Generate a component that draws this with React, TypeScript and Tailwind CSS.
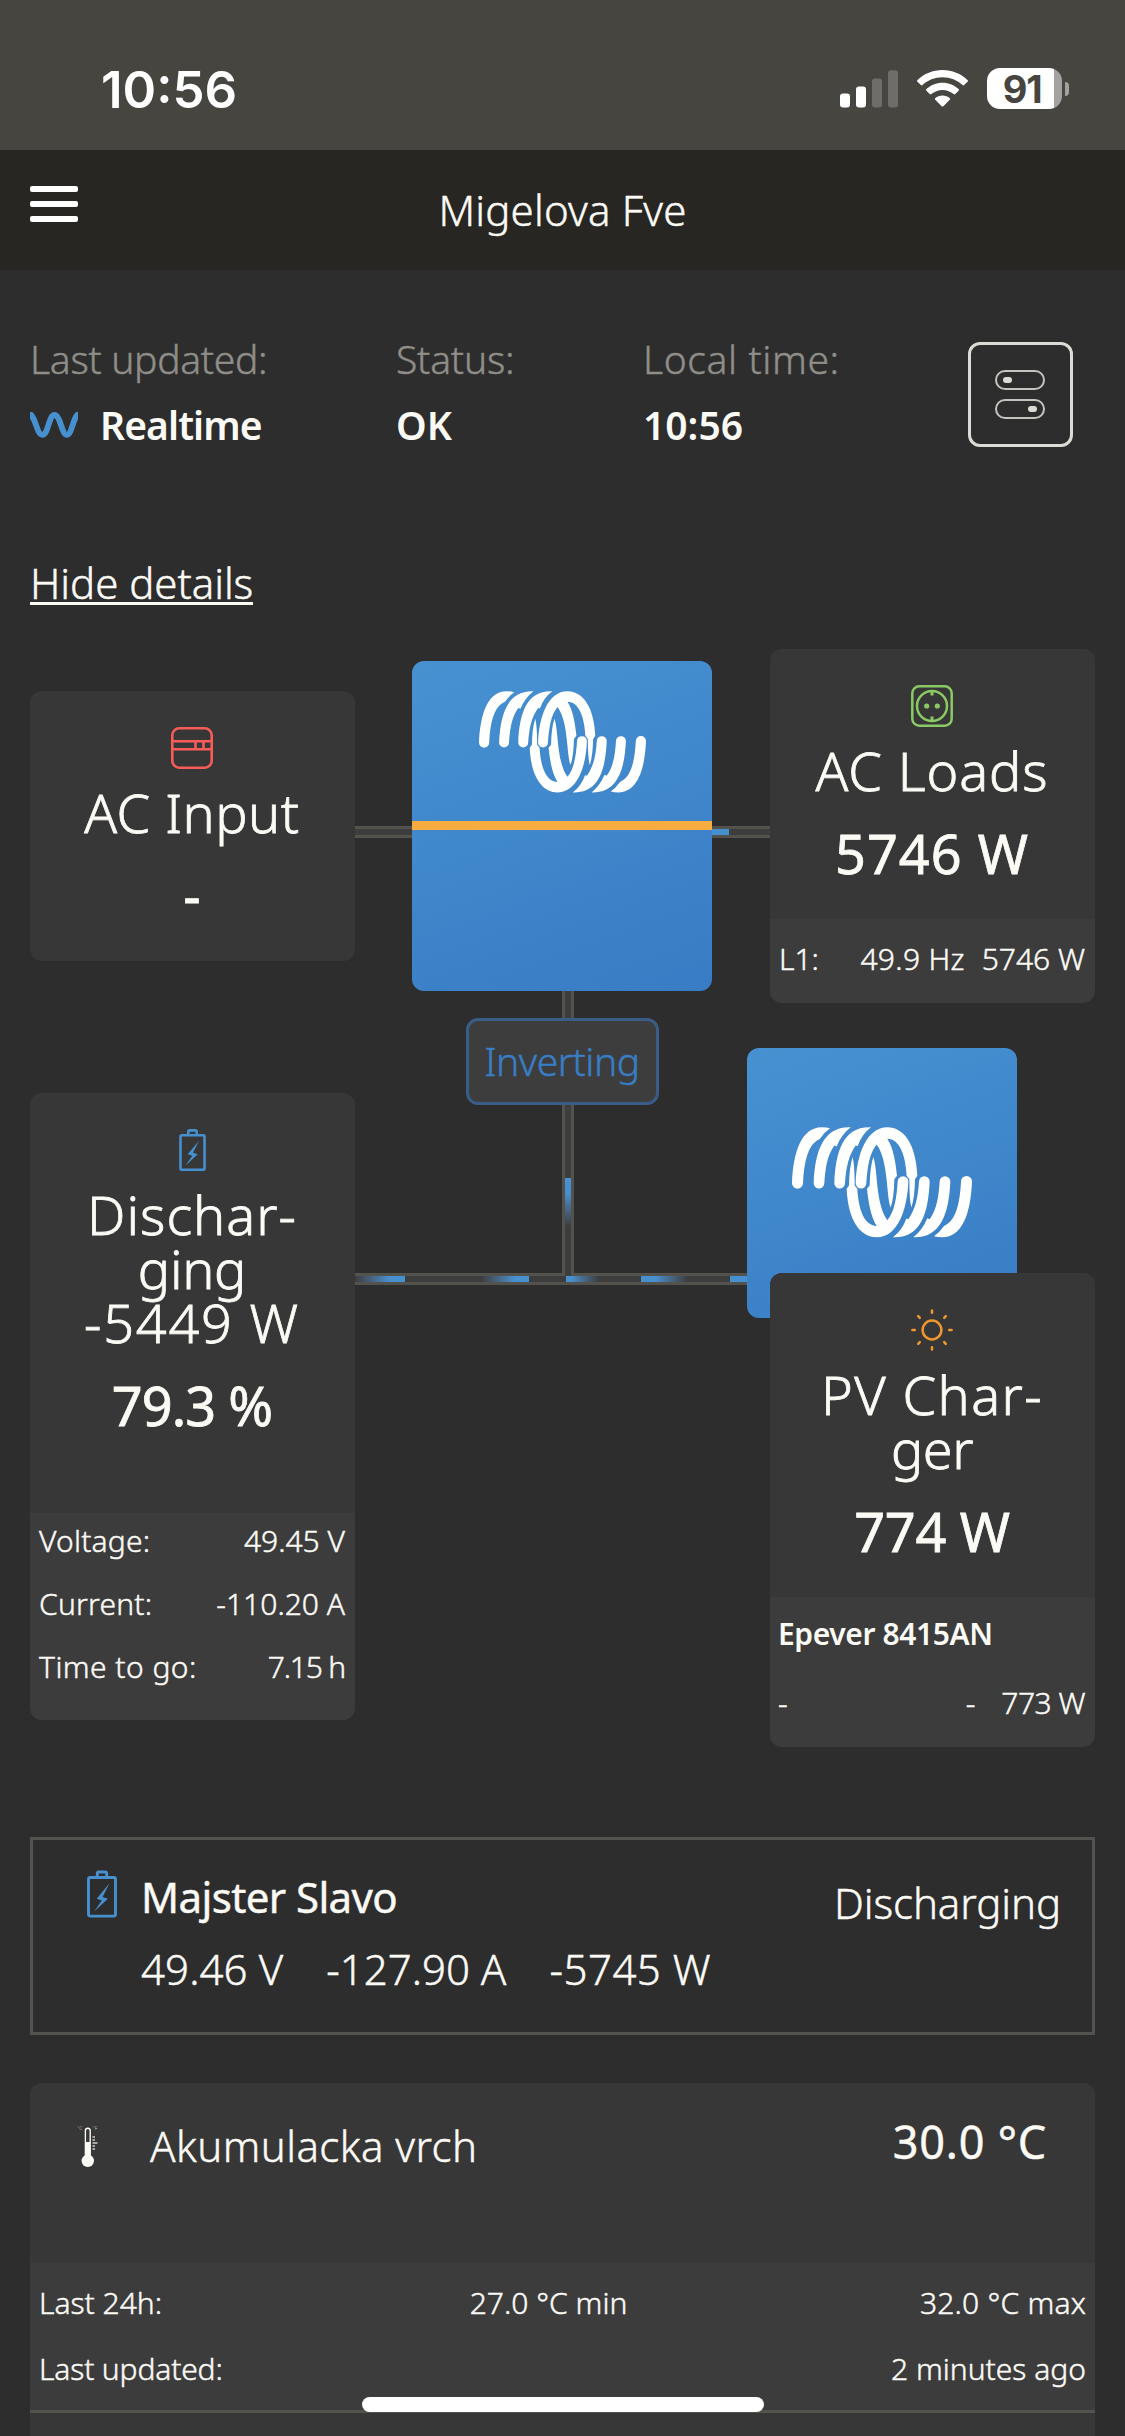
import React from 'react';

/* ---------- icons ---------- */

const coils = [
  'M36 206C40 110 65 40 125 39Q140 39 150 42Q135 52 120 73L110 79C85 95 72 140 69 206a16.5 16.5 0 0 1-33 0Z',
  'M101 206C105 110 130 36 212 39Q185 60 170 96L163 93C140 125 136 165 133 206a16 16 0 0 1-32 0Z',
  'M163 206C167 110 190 36 273 39Q245 60 233 95L227 93C205 125 198 160 195 206a16 16 0 0 1-32 0Z',
  'M227 206C230 120 260 39 322 39C372 39 408 90 412 184L405 194Q404 250 394 279Q388 255 388 194L380 184C377 125 360 73 322 73C340 100 347 145 351 184L343 194Q342 250 332 279C318 240 326 140 290 90C268 115 262 160 259 206a16 16 0 0 1-32 0Z',
];

function CoilLogo({ className }: { className: string }) {
  return (
    <svg viewBox="36 38 540 332" preserveAspectRatio="none" fill="#fff" className={className}>
      {coils.map((d) => (
        <path key={d} d={d} />
      ))}
      <g transform="rotate(180 306 203.5)">
        {coils.map((d) => (
          <path key={d} d={d} />
        ))}
      </g>
    </svg>
  );
}

function GridInputIcon() {
  return (
    <svg viewBox="0 0 42 42" fill="none" stroke="#f75c58" strokeWidth="2.6" className="size-[42px]">
      <rect x="1.3" y="1.3" width="39.4" height="39.4" rx="7" />
      <path d="M1 14.3h40M1 22.3h40M24.5 14v8M32.5 14v8" />
    </svg>
  );
}

function SocketIcon() {
  return (
    <svg viewBox="0 0 42 42" fill="none" stroke="#8bc964" strokeWidth="2.5" className="size-[42px]">
      <rect x="1.3" y="1.3" width="39.4" height="39.4" rx="7" />
      <circle cx="21" cy="21" r="15" />
      <path d="M21 6v4.5M21 31.5V36" strokeWidth="3" />
      <circle cx="15.7" cy="21" r="2.6" fill="#8bc964" stroke="none" />
      <circle cx="26.3" cy="21" r="2.6" fill="#8bc964" stroke="none" />
    </svg>
  );
}

function BatteryIcon({ className }: { className: string }) {
  return (
    <svg viewBox="0 0 28 44" fill="none" stroke="#4790d0" strokeWidth="2.7" className={className}>
      <path d="M9.6 6V3q0-1.6 1.6-1.6h5.6q1.6 0 1.6 1.6v3" />
      <rect x="1.4" y="6.6" width="25.2" height="36" rx="1.6" />
      <path d="M21 12 9 26.5l4.8 1.5L6.5 38.5 19.5 26.5l-5-1.6z" fill="#4790d0" stroke="none" />
    </svg>
  );
}

function SunIcon() {
  return (
    <svg
      viewBox="0 0 42 42"
      fill="none"
      stroke="#f0962e"
      strokeWidth="2.5"
      strokeLinecap="round"
      className="size-[42px]"
    >
      <circle cx="21" cy="21" r="9.4" />
      <path d="M21 1.4v2.4M21 38.2v2.4M1.4 21h2.4M38.2 21h2.4M7.2 7.2l1.6 1.6M33.2 33.2l1.6 1.6M34.8 7.2l-1.6 1.6M8.8 33.2l-1.6 1.6" />
    </svg>
  );
}

function ThermometerIcon() {
  return (
    <svg viewBox="0 0 22 42" className="h-[42px] w-[22px] [-webkit-text-stroke:0px]">
      <rect x="8.4" y="3.2" width="4.8" height="30" rx="2.4" fill="none" stroke="#fbfaf5" strokeWidth="1.4" />
      <rect x="8.2" y="17" width="5.2" height="16" fill="#fbfaf5" />
      <circle cx="10.8" cy="35.8" r="6.2" fill="#fbfaf5" />
      <path
        d="M15.5 12h2.5M15.5 15h2.5M15.5 18h5M15.5 21h2.5M15.5 24h2.5"
        stroke="#cfcfc9"
        strokeWidth="1.4"
      />
      <text x="0" y="4.5" fontSize="5" fill="#cfcfc9">°C</text>
      <text x="15.5" y="4.5" fontSize="5" fill="#cfcfc9">°F</text>
    </svg>
  );
}

function WaveIcon() {
  return (
    <svg viewBox="0 0 48 26" className="h-[26px] w-12" fill="none" stroke="#4790d0" strokeWidth="5.8">
      <path d="M-3 1C6 1 6 22.8 12.3 22.8S18.5 3 24.5 3S31.5 22.8 37 22.8S43 1 51 1" />
    </svg>
  );
}

function SignalIcon() {
  return (
    <svg viewBox="0 0 58 38" className="h-[38px] w-[58px]" fill="#fff">
      <rect x="0" y="23.5" width="10" height="14" rx="3" />
      <rect x="16" y="16.5" width="10" height="21" rx="3" />
      <rect x="32" y="8.5" width="10" height="29" rx="3" opacity=".22" />
      <rect x="48" y="0.3" width="10" height="37.2" rx="3" opacity=".22" />
    </svg>
  );
}

function WifiIcon() {
  return (
    <svg viewBox="0 0 51 37" className="h-[37px] w-[51px]" fill="#fff">
      <path d="M25.5 0C35.2 0 44 3.8 50.5 10Q51.4 10.9 50.5 11.8L47.2 15.1Q46.4 15.9 45.5 15.1C40.3 10.2 33.2 7.3 25.5 7.3S10.7 10.2 5.5 15.1Q4.6 15.9 3.8 15.1L.5 11.8Q-.4 10.9 .5 10C7 3.8 15.8 0 25.5 0Z" />
      <path d="M25.5 12.7C31.7 12.7 37.4 15.1 41.6 19Q42.5 19.9 41.6 20.8L38.3 24.1Q37.5 24.9 36.6 24.1C33.7 21.5 29.8 19.9 25.5 19.9S17.3 21.5 14.4 24.1Q13.5 24.9 12.7 24.1L9.4 20.8Q8.5 19.9 9.4 19C13.6 15.1 19.3 12.7 25.5 12.7Z" />
      <path d="M25.5 25.4C28.3 25.4 30.8 26.4 32.7 28Q33.6 28.9 32.7 29.8L26.4 36.2Q25.5 37 24.6 36.2L18.3 29.8Q17.4 28.9 18.3 28C20.2 26.4 22.7 25.4 25.5 25.4Z" />
    </svg>
  );
}

/* ---------- top bars ---------- */

function StatusBar() {
  return (
    <div className="flex h-[150px] items-start justify-between bg-[#464540] pr-[56px] pl-[101px] [-webkit-text-stroke:0px]">
      <span className="mt-[64px] font-[Inter] text-[51px] leading-[51px] font-semibold text-white">10:56</span>
      <div className="mt-[68px] flex items-center">
        <SignalIcon />
        <div className="ml-[19px]">
          <WifiIcon />
        </div>
        <div className="ml-[19px] flex items-center">
          <div className="flex h-[41px] w-[75px] items-center justify-center rounded-[13px] bg-linear-to-r from-white from-[90%] to-[#a3a2a0] to-[90%]">
            <span className="mr-[5px] font-[Inter] text-[38px] leading-[38px] font-bold tracking-[-1.2px] text-[#464540]">
              91
            </span>
          </div>
          <div className="ml-[3px] h-[14px] w-[4px] rounded-r-full bg-[#a3a2a0]" />
        </div>
      </div>
    </div>
  );
}

function NavBar() {
  return (
    <header className="grid h-[120px] grid-cols-[1fr_auto_1fr] items-start bg-[#272622]">
      <div className="mt-[36px] ml-[30px] flex w-[48px] flex-col gap-[9px]">
        <div className="h-[6px] rounded-[2px] bg-white" />
        <div className="h-[6px] rounded-[2px] bg-white" />
        <div className="h-[6px] rounded-[2px] bg-white" />
      </div>
      <h1 className="mt-[39px] text-[42px] leading-[42px] tracking-[0.2px]">Migelova Fve</h1>
    </header>
  );
}

/* ---------- summary ---------- */

function Summary() {
  return (
    <section className="flex h-[178px] items-start pt-[69px] pr-[52px] pl-[30px] text-[39px] leading-[39px]">
      <div className="w-[366px]">
        <p className="tracking-[-0.3px] text-[#8f8e88]">Last updated:</p>
        <div className="mt-[27px] flex items-center">
          <WaveIcon />
          <span className="ml-[22px] font-semibold tracking-[-0.9px] [-webkit-text-stroke:0px]">Realtime</span>
        </div>
      </div>
      <div className="w-[247px]">
        <p className="tracking-[-0.2px] text-[#8f8e88]">Status:</p>
        <p className="mt-[27px] font-semibold [-webkit-text-stroke:0px]">OK</p>
      </div>
      <div className="grow">
        <p className="tracking-[0.6px] text-[#8f8e88]">Local time:</p>
        <p className="mt-[27px] font-semibold [-webkit-text-stroke:0px]">10:56</p>
      </div>
      <button className="mt-[3px] flex h-[105px] w-[105px] flex-col items-center justify-center gap-[9px] rounded-xl border-[3px] border-[#dcdbd6] pr-px">
        <span className="flex h-[20px] w-[50px] items-center rounded-full border-2 border-[#c4c3be] pl-[6px]">
          <span className="h-[6px] w-[9px] rounded-full bg-[#dcdbd6]" />
        </span>
        <span className="flex h-[20px] w-[50px] items-center justify-end rounded-full border-2 border-[#c4c3be] pr-[6px]">
          <span className="h-[6px] w-[9px] rounded-full bg-[#dcdbd6]" />
        </span>
      </button>
    </section>
  );
}

/* ---------- energy flow diagram ---------- */

type NodeProps = {
  className: string;
  icon: React.ReactNode;
  title: React.ReactNode;
  value: string;
  headClass: string;
  titleClass: string;
  valueClass: string;
  children?: React.ReactNode;
};

function EnergyNode({ className, icon, title, value, headClass, titleClass, valueClass, children }: NodeProps) {
  return (
    <article className={`absolute w-[325px] overflow-hidden rounded-xl bg-[#3c3c3c] ${className}`}>
      <div className={`flex flex-col items-center bg-[#373737] pt-[36px] pr-px text-center ${headClass}`}>
        {icon}
        <h2 className={`mt-[16px] text-[54px] leading-[54px] [-webkit-text-stroke:0.8px] ${titleClass}`}>{title}</h2>
        <p className={`mt-[29px] text-[54px] leading-[54px] font-normal [-webkit-text-stroke:0.8px] ${valueClass}`}>
          {value}
        </p>
      </div>
      {children}
    </article>
  );
}

function DetailRow({
  label,
  value,
  labelClass = '',
  valueClass = '',
}: {
  label: string;
  value: string;
  labelClass?: string;
  valueClass?: string;
}) {
  return (
    <div className="flex justify-between">
      <span className={labelClass}>{label}</span>
      <span className={valueClass}>{value}</span>
    </div>
  );
}

function EnergyFlow() {
  return (
    <section className="relative mt-[44px] h-[1098px]">
      {/* wires */}
      <div className="absolute top-[177px] left-[355px] h-3 w-[57px] border-y-[3px] border-[#53524c] bg-[#3d3d3d]" />
      <div className="absolute top-[177px] left-[712px] h-3 w-[58px] border-y-[3px] border-[#53524c] bg-[#3d3d3d]">
        <div className="h-full w-[17px] bg-[#4790d0]" />
      </div>
      <div className="absolute top-[624px] left-[355px] flex h-3 w-[392px] border-y-[3px] border-[#53524c] bg-[#3d3d3d]">
        <div className="h-full w-[50px] bg-linear-to-r from-[#3d3d3d] to-[#4790d0] to-70%" />
        <div className="ml-[76px] h-full w-[48px] bg-linear-to-r from-[#3d3d3d] to-[#4790d0] to-70%" />
        <div className="ml-[37px] h-full w-[33px] bg-linear-to-r from-[#4790d0] from-15% to-[#3d3d3d]" />
        <div className="ml-[42px] h-full w-[47px] bg-linear-to-r from-[#4790d0] from-30% to-[#3d3d3d]" />
        <div className="ml-[42px] h-full w-[17px] bg-[#4790d0]" />
      </div>
      <div className="absolute top-[342px] left-[562px] h-[285px] w-3 border-x-[3px] border-[#53524c] bg-[#3d3d3d]">
        <div className="mt-[187px] h-[49px] bg-linear-to-b from-[#4790d0] from-30% to-[#3d3d3d]" />
      </div>

      {/* inverter */}
      <div className="absolute top-[12px] left-[412px] flex h-[330px] w-[300px] flex-col items-center overflow-hidden rounded-xl bg-linear-160 from-[#4791d1] to-[#387cc5]">
        <CoilLogo className="mt-[30px] h-[102px] w-[167px]" />
        <div className="mt-[28px] h-[9px] w-full bg-[#f7ac3f]" />
      </div>
      <div className="absolute top-[369px] left-[466px] flex h-[87px] w-[193px] justify-center rounded-xl border-[3px] border-[#3a5d88] bg-[#3d3d3d] pt-[20px] pr-px text-[39px] leading-[39px] tracking-[-0.5px] text-[#387dc5]">
        Inverting
      </div>
      <div className="absolute top-[399px] left-[747px] flex h-[270px] w-[270px] justify-center rounded-xl bg-linear-160 from-[#4791d1] to-[#387cc5] pt-[79px]">
        <CoilLogo className="h-[111px] w-[180px]" />
      </div>

      {/* nodes */}
      <EnergyNode
        className="top-[42px] left-[30px]"
        icon={<GridInputIcon />}
        title="AC Input"
        value="-"
        headClass="h-[270px]"
        titleClass="tracking-[0.5px]"
        valueClass=""
      />
      <EnergyNode
        className="top-0 left-[770px]"
        icon={<SocketIcon />}
        title="AC Loads"
        value="5746 W"
        headClass="h-[270px]"
        titleClass="tracking-[0.9px]"
        valueClass="tracking-[1px]"
      >
        <div className="flex h-[84px] pt-[25px] pr-[10px] pl-[9px] text-[30px] leading-[30px]">
          <span className="grow">L1:</span>
          <span className="tracking-[0.3px]">49.9 Hz</span>
          <span className="ml-[17px]">5746 W</span>
        </div>
      </EnergyNode>
      <EnergyNode
        className="top-[444px] left-[30px]"
        icon={<BatteryIcon className="h-[42px] w-[27px]" />}
        title={
          <>
            <span className="tracking-[1px]">Dischar-</span>
            <br />
            ging
            <br />
            <span className="tracking-[1.8px]">-5449 W</span>
          </>
        }
        value="79.3 %"
        headClass="h-[420px]"
        titleClass="tracking-[-0.3px]"
        valueClass="tracking-[-0.9px]"
      >
        <div className="flex h-[207px] flex-col gap-[33px] pt-[13px] pr-[10px] pl-[9px] text-[30px] leading-[30px]">
          <DetailRow label="Voltage:" value="49.45 V" labelClass="tracking-[0.2px]" />
          <DetailRow label="Current:" value="-110.20 A" labelClass="tracking-[0.2px]" />
          <DetailRow
            label="Time to go:"
            value="7.15 h"
            labelClass="tracking-[0.45px]"
            valueClass="tracking-[-1.2px]"
          />
        </div>
      </EnergyNode>
      <EnergyNode
        className="top-[624px] left-[770px]"
        icon={<SunIcon />}
        title={
          <>
            <span className="tracking-[1.4px]">PV Char-</span>
            <br />
            ger
          </>
        }
        value="774 W"
        headClass="h-[324px]"
        titleClass="tracking-[-0.5px]"
        valueClass="tracking-[-0.3px]"
      >
        <div className="flex h-[150px] flex-col gap-[39px] pt-[22px] pr-[10px] pl-[8px] text-[30px] leading-[30px]">
          <p className="font-semibold tracking-[-0.4px] [-webkit-text-stroke:0px]">Epever 8415AN</p>
          <div className="flex">
            <span className="grow">-</span>
            <span>-</span>
            <span className="ml-[26px] tracking-[-0.5px]">773 W</span>
          </div>
        </div>
      </EnergyNode>
    </section>
  );
}

/* ---------- devices ---------- */

function BatteryMonitor() {
  return (
    <section className="mx-[30px] mt-[90px] flex h-[198px] border-[3px] border-[#53524c] pl-[54px] text-[42px] leading-[42px]">
      <BatteryIcon className="mt-[30px] h-[48px] w-[30px]" />
      <div className="mt-[36px] ml-[24px] grow">
        <p className="font-normal tracking-[-0.6px]">Majster Slavo</p>
        <div className="mt-[30px] flex gap-[43px]">
          <span className="tracking-[0.1px]">49.46 V</span>
          <span>-127.90 A</span>
          <span className="tracking-[0.5px]">-5745 W</span>
        </div>
      </div>
      <p className="mt-[42px] mr-[31px] tracking-[-0.1px]">Discharging</p>
    </section>
  );
}

function TemperatureCard() {
  return (
    <section className="mx-[30px] mt-[48px] overflow-hidden rounded-t-xl bg-[#3c3c3c]">
      <div className="flex h-[180px] items-start bg-[#373737] pr-[48px] pl-[47px]">
        <div className="mt-[42px]">
          <ThermometerIcon />
        </div>
        <h3 className="mt-[42px] ml-[51px] grow text-[42px] leading-[42px] tracking-[0.45px]">Akumulacka vrch</h3>
        <p className="mt-[36px] text-[45px] leading-[45px] font-normal tracking-[0.8px]">30.0 °C</p>
      </div>
      <div className="flex h-[147px] flex-col gap-[36px] pt-[25px] pr-[9px] pl-[9px] text-[30px] leading-[30px]">
        <div className="grid grid-cols-[1fr_auto_1fr]">
          <span>Last 24h:</span>
          <span className="-ml-[28px]">27.0 °C min</span>
          <span className="text-right tracking-[0.2px]">32.0 °C max</span>
        </div>
        <DetailRow label="Last updated:" value="2 minutes ago" labelClass="tracking-[-0.15px]" />
      </div>
      <div className="h-[26px] border-t-[3px] border-[#53524c] bg-[#373737]" />
    </section>
  );
}

export default function App() {
  return (
    <main className="relative h-[2436px] w-[1125px] overflow-hidden bg-[#2d2d2d] font-['Noto_Sans',sans-serif] font-light text-[#fbfaf5] [-webkit-text-stroke:0.45px]">
      <StatusBar />
      <NavBar />
      <Summary />
      <div className="mt-[114px] flex pl-[30px]">
        <a className="h-[43px] border-b-[3px] border-[#fbfaf5] text-[42px] leading-[42px] tracking-[-0.05px]">
          Hide details
        </a>
      </div>
      <EnergyFlow />
      <BatteryMonitor />
      <TemperatureCard />
      <div className="absolute top-[2397px] left-[362px] h-[15px] w-[402px] rounded-full bg-white" />
    </main>
  );
}
